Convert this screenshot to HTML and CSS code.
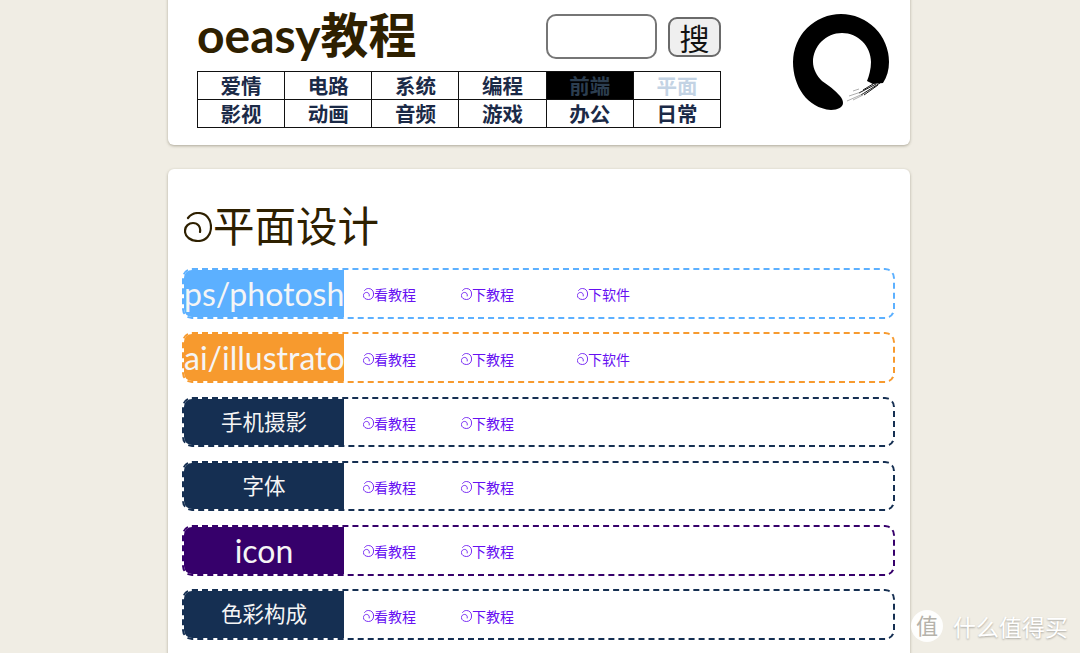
FILE: index.html
```html
<!DOCTYPE html>
<html lang="zh-CN">
<head>
    <meta charset="UTF-8">
    <title>oeasy教程</title>
    <link rel="stylesheet" href="styles.css">
</head>
<body>
    <svg class="defs" width="0" height="0">
        <symbol id="spiral" viewBox="0 0 28 30">
            <path d="M4 6C7 2 10 1 14 1C22 1 27 7 27 15C27 23 22 29 14 29C7 29 1 25 1 19C1 14 5 11 9 11C14 11 17 15 16 20" fill="none" stroke="currentColor" stroke-width="2.2" stroke-linecap="round"/>
        </symbol>
    </svg>

    <div class="page">
        <div class="card header">
            <div class="header-main">
                <div class="title-row">
                    <h1 class="site-title">oeasy教程</h1>
                    <div class="search">
                        <input type="text" class="search-input">
                        <button class="search-btn">搜</button>
                    </div>
                </div>
                <div class="nav">
                    <a class="nav-item">爱情</a>
                    <a class="nav-item">电路</a>
                    <a class="nav-item">系统</a>
                    <a class="nav-item">编程</a>
                    <a class="nav-item dark">前端</a>
                    <a class="nav-item pale">平面</a>
                    <a class="nav-item">影视</a>
                    <a class="nav-item">动画</a>
                    <a class="nav-item">音频</a>
                    <a class="nav-item">游戏</a>
                    <a class="nav-item">办公</a>
                    <a class="nav-item">日常</a>
                </div>
            </div>
            <svg class="logo" viewBox="0 0 96 96" width="96" height="96">
                <path d="M50 89C50 93 45 96 38 96C14 94 0 72 0 48A48 48 0 0 1 96 48C96 56 94 63 90 69L80 70L74 67C76 62 78 55 78 48C78 32 65 19 49 19C33 19 20 32 20 48C20 55 24 62 29 67C35 71 42 76 47 82C49 84 50 87 50 89Z" fill="#000"/>
                <path d="M87 69L68 81M83 70L66 79M85 71L71 81M80 70L70 76" fill="none" stroke="#000" stroke-width="0.9"/>
                <path d="M72 79L54 87M68 78L56 82M70 81L60 86M66 75L60 77" fill="none" stroke="#777" stroke-width="0.6"/>
            </svg>
        </div>

        <div class="card content">
            <h2 class="section-title"><svg class="spiral-big"><use href="#spiral"/></svg>平面设计</h2>

            <div class="row blue">
                <div class="row-label">ps/photoshop</div>
                <div class="row-links">
                    <a class="link"><svg class="spiral"><use href="#spiral"/></svg>看教程</a>
                    <a class="link"><svg class="spiral"><use href="#spiral"/></svg>下教程</a>
                    <a class="link"><svg class="spiral"><use href="#spiral"/></svg>下软件</a>
                </div>
            </div>
            <div class="row orange">
                <div class="row-label">ai/illustrator</div>
                <div class="row-links">
                    <a class="link"><svg class="spiral"><use href="#spiral"/></svg>看教程</a>
                    <a class="link"><svg class="spiral"><use href="#spiral"/></svg>下教程</a>
                    <a class="link"><svg class="spiral"><use href="#spiral"/></svg>下软件</a>
                </div>
            </div>
            <div class="row navy">
                <div class="row-label cjk">手机摄影</div>
                <div class="row-links">
                    <a class="link"><svg class="spiral"><use href="#spiral"/></svg>看教程</a>
                    <a class="link"><svg class="spiral"><use href="#spiral"/></svg>下教程</a>
                </div>
            </div>
            <div class="row navy">
                <div class="row-label cjk">字体</div>
                <div class="row-links">
                    <a class="link"><svg class="spiral"><use href="#spiral"/></svg>看教程</a>
                    <a class="link"><svg class="spiral"><use href="#spiral"/></svg>下教程</a>
                </div>
            </div>
            <div class="row purple">
                <div class="row-label">icon</div>
                <div class="row-links">
                    <a class="link"><svg class="spiral"><use href="#spiral"/></svg>看教程</a>
                    <a class="link"><svg class="spiral"><use href="#spiral"/></svg>下教程</a>
                </div>
            </div>
            <div class="row navy">
                <div class="row-label cjk">色彩构成</div>
                <div class="row-links">
                    <a class="link"><svg class="spiral"><use href="#spiral"/></svg>看教程</a>
                    <a class="link"><svg class="spiral"><use href="#spiral"/></svg>下教程</a>
                </div>
            </div>
        </div>
    </div>

    <div class="watermark">
        <span class="watermark-badge">值</span>
        <span class="watermark-text">什么值得买</span>
    </div>
</body>
</html>
```

FILE: styles.css
```css
html, body {
    height: 653px;
    overflow: hidden;
}

body {
    margin: 0;
    background-color: #f0ede4;
    font-family: Lato, "Noto Sans CJK SC", sans-serif;
    color: #2e2000;
}

.defs {
    display: block;
    height: 0;
}

.page {
    width: 742px;
    margin: -10px 0 0 168px;
}

.card {
    background: white;
    border-radius: 6px;
    box-shadow: 0 1px 3px rgba(90, 85, 60, 0.45);
}

.header {
    display: flex;
    height: 155px;
    box-sizing: border-box;
    padding: 24px 20px 0 29px;
    margin-bottom: 24px;
}

.header-main {
    width: 524px;
}

.title-row {
    display: flex;
    justify-content: space-between;
    height: 57px;
}

.site-title {
    margin: -11px 0 0 0;
    font-size: 48px;
    line-height: 64px;
    font-weight: bold;
}

.search {
    display: flex;
    align-items: flex-start;
    gap: 11px;
}

.search-input {
    width: 111px;
    height: 45px;
    box-sizing: border-box;
    border: 2px solid #767676;
    border-radius: 10px;
    background: white;
}

.search-btn {
    width: 53px;
    height: 40px;
    margin-top: 3px;
    padding: 0;
    box-sizing: border-box;
    border: 2px solid #6a6a6a;
    border-radius: 9px;
    background-color: #efefef;
    color: #111;
    font-family: "Noto Sans CJK SC", sans-serif;
    font-size: 30px;
    line-height: 36px;
}

.nav {
    display: grid;
    grid-template-columns: repeat(6, 1fr);
    grid-auto-rows: 28.2px;
    width: 524px;
    box-sizing: border-box;
    border: 1px solid #111;
    border-right: 0;
    border-bottom: 0;
}

.nav-item {
    border-right: 1px solid #111;
    border-bottom: 1px solid #111;
    text-align: center;
    font-size: 20.5px;
    font-weight: bold;
    line-height: 29px;
    color: #1b2a47;
}

.nav-item.dark {
    background: black;
    color: #2c3e50;
}

.nav-item.pale {
    color: #c3d3e4;
}

.logo {
    margin: 0 0 0 72px;
    flex-shrink: 0;
}

.content {
    padding: 1px 15px 60px 14px;
    min-height: 480px;
}

.section-title {
    display: flex;
    align-items: center;
    margin: 33px 0 19px 0;
    font-size: 41.5px;
    font-weight: 400;
    line-height: 46px;
}

.spiral-big {
    width: 28px;
    height: 30px;
    margin: 2px 1px 0 2px;
}

.row {
    display: flex;
    height: 50.6px;
    box-sizing: border-box;
    margin-bottom: 13.7px;
    border: 2px dashed;
    border-radius: 10px;
    background: white;
    overflow: hidden;
}

.row.blue { border-color: #5cb0ff; }
.row.orange { border-color: #f79a2e; }
.row.navy { border-color: #152f52; }
.row.purple { border-color: #36006b; }

.row-label {
    width: 160px;
    flex-shrink: 0;
    overflow: hidden;
    white-space: nowrap;
    text-align: center;
    font-size: 32px;
    line-height: 47px;
    color: #f5f5f5;
}

.row-label.cjk {
    font-size: 21.5px;
}

.blue .row-label { background-color: #5cb0ff; }
.orange .row-label { background-color: #f79a2e; }
.navy .row-label { background-color: #152f52; }
.purple .row-label { background-color: #36006b; }

.row-links {
    display: grid;
    grid-template-columns: 98px 116px auto;
    align-items: center;
    padding: 2px 0 0 19px;
}

.link {
    display: flex;
    align-items: center;
    font-size: 14px;
    color: #6610f2;
}

.spiral {
    width: 11px;
    height: 12px;
}

.watermark {
    position: absolute;
    left: 911px;
    top: 609px;
    display: flex;
    align-items: center;
    gap: 10px;
}

.watermark-badge {
    width: 32px;
    height: 32px;
    border-radius: 50%;
    background: rgba(255, 255, 255, 0.9);
    color: #b5b2aa;
    font-size: 22px;
    line-height: 32px;
    text-align: center;
}

.watermark-text {
    font-size: 23px;
    color: white;
    text-shadow: 0 1px 2px rgba(0, 0, 0, 0.3);
}
```
